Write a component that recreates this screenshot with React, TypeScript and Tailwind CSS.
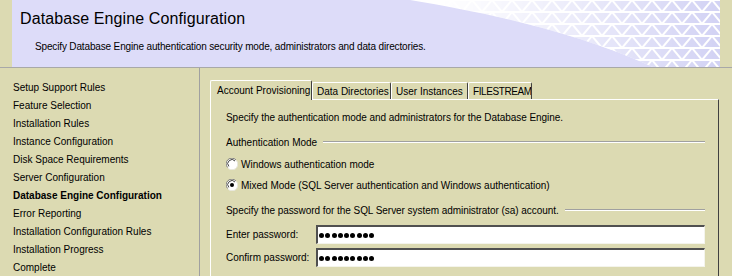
import React from 'react';

const navItems = [
    'Setup Support Rules',
    'Feature Selection',
    'Installation Rules',
    'Instance Configuration',
    'Disk Space Requirements',
    'Server Configuration',
    'Database Engine Configuration',
    'Error Reporting',
    'Installation Configuration Rules',
    'Installation Progress',
    'Complete',
];

const tabs = [
    { label: 'Account Provisioning', width: 'w-[102px]', active: true },
    { label: 'Data Directories', width: 'w-[79px]' },
    { label: 'User Instances', width: 'w-[77px]' },
    { label: 'FILESTREAM', width: 'w-[64px] tracking-[-0.4px]' },
];

function HeaderWave() {
    return (
        <svg className="absolute inset-0" width="708" height="67" viewBox="0 0 708 67">
            <defs>
                <pattern id="mesh" patternUnits="userSpaceOnUse" width="20" height="12">
                    <rect width="20" height="12" fill="#d2d2f4" />
                    <path d="M0 0 L20 0 M0 0 L10 12 M20 0 L10 12 M0 12 L20 12" stroke="#ffffff" strokeWidth="2" />
                </pattern>
                <linearGradient id="fade" x1="430" y1="0" x2="708" y2="0" gradientUnits="userSpaceOnUse">
                    <stop offset="0" stopColor="#fff" stopOpacity="0" />
                    <stop offset="0.45" stopColor="#fff" stopOpacity="0.4" />
                    <stop offset="1" stopColor="#fff" stopOpacity="1" />
                </linearGradient>
                <mask id="fadeMask">
                    <rect width="708" height="67" fill="url(#fade)" />
                </mask>
                <clipPath id="waveClip">
                    <path d="M398 0 C470 12 560 30 641 67 L708 67 L708 0 Z" />
                </clipPath>
            </defs>
            <path d="M398 0 C470 12 560 30 641 67 L708 67 L708 0 Z" fill="#ffffff" />
            <g clipPath="url(#waveClip)" mask="url(#fadeMask)">
                <rect x="420" y="0" width="288" height="67" fill="url(#mesh)" />
            </g>
        </svg>
    );
}

function Radio({ checked }: { checked?: boolean }) {
    return (
        <svg width="12" height="12" viewBox="0 0 12 12" className="shrink-0">
            <circle cx="6" cy="6" r="5.5" fill="#ffffff" />
            <path d="M10 2 A5.5 5.5 0 0 0 1.6 9.5" fill="none" stroke="#808080" strokeWidth="1" />
            <path d="M9 3 A4 4 0 0 0 2.8 8.4" fill="none" stroke="#404040" strokeWidth="1" />
            <path d="M2 10 A5.5 5.5 0 0 0 10.4 2.5" fill="none" stroke="#e8e8e0" strokeWidth="1" />
            {checked && <circle cx="6" cy="6" r="2" fill="#000000" />}
        </svg>
    );
}

function Etched() {
    return <div className="flex-1 h-[2px] border-t border-t-[#a0a0a0] border-b border-b-white" />;
}

function PasswordField({ label }: { label: string }) {
    return (
        <div className="flex items-center h-[19px]">
            <div className="w-[90px]">{label}</div>
            <div className="w-[389px] h-[19px] bg-white border-t-2 border-l-2 border-t-[#505050] border-l-[#505050] border-r border-b border-r-[#f4f4ec] border-b-[#f4f4ec] flex items-center pl-[1px]">
                <span className="flex gap-[1.25px]">
                    {Array.from({ length: 9 }).map((_, i) => (
                        <span key={i} className="w-[5px] h-[5px] rounded-full bg-black" />
                    ))}
                </span>
            </div>
        </div>
    );
}

export default function App() {
    return (
        <div className="w-[732px] h-[276px] overflow-hidden bg-[#dcdab2] text-black font-['Liberation_Sans',Arial,sans-serif] text-[10px]">
            {/* header */}
            <div className="px-3 border-b border-[#a8a8a8]">
                <div className="relative h-[67px] bg-[#dddcf9] overflow-hidden">
                    <HeaderWave />
                    <div className="relative pl-[8px] pt-[9px] text-[16px] leading-[20px] tracking-[0.1px]">Database Engine Configuration</div>
                    <div className="relative pl-[23px] pt-[11px] leading-[14px] tracking-[-0.15px]">
                        Specify Database Engine authentication security mode, administrators and data directories.
                    </div>
                </div>
            </div>

            <div className="flex h-[208px]">
                {/* step list */}
                <div className="w-[200px] shrink-0 border-r border-[#a0a0a0] pl-[13px] pt-[11px]">
                    {navItems.map((item) => (
                        <div key={item} className={`h-[18px] leading-[18px] ${item === 'Database Engine Configuration' ? 'font-bold' : ''}`}>
                            {item}
                        </div>
                    ))}
                </div>

                {/* tab area */}
                <div className="pl-[10px] pt-[12px]">
                    <div className="flex items-end h-[19px]">
                        {tabs.map((t) => (
                            <div
                                key={t.label}
                                className={`${t.width} ${t.active ? 'h-[20px] -mb-px relative z-10 bg-[#dcdab2] pl-[6px]' : 'h-[17px] pl-[4px]'} border-l border-t border-white border-r border-r-[#404040] rounded-t-[2px] flex items-center whitespace-nowrap overflow-hidden`}
                            >
                                {t.label}
                            </div>
                        ))}
                    </div>
                    <div className="w-[509px] h-[190px] border-l border-t border-white border-r border-r-[#404040] pl-[15px] pr-[13px]">
                        <div className="mt-[11px] h-[14px] leading-[14px] tracking-[-0.05px]">Specify the authentication mode and administrators for the Database Engine.</div>
                        <div className="mt-[10px] h-[14px] flex items-center gap-[6px]">
                            <span>Authentication Mode</span>
                            <Etched />
                        </div>
                        <div className="mt-[8px] h-[14px] flex items-center gap-[3px]">
                            <Radio />
                            <span>Windows authentication mode</span>
                        </div>
                        <div className="mt-[7px] h-[14px] flex items-center gap-[3px]">
                            <Radio checked />
                            <span>Mixed Mode (SQL Server authentication and Windows authentication)</span>
                        </div>
                        <div className="mt-[11px] h-[14px] flex items-center gap-[6px]">
                            <span className="tracking-[-0.05px]">Specify the password for the SQL Server system administrator (sa) account.</span>
                            <Etched />
                        </div>
                        <div className="mt-[8px]">
                            <PasswordField label="Enter password:" />
                        </div>
                        <div className="mt-[4px]">
                            <PasswordField label="Confirm password:" />
                        </div>
                    </div>
                </div>
            </div>
        </div>
    );
}
